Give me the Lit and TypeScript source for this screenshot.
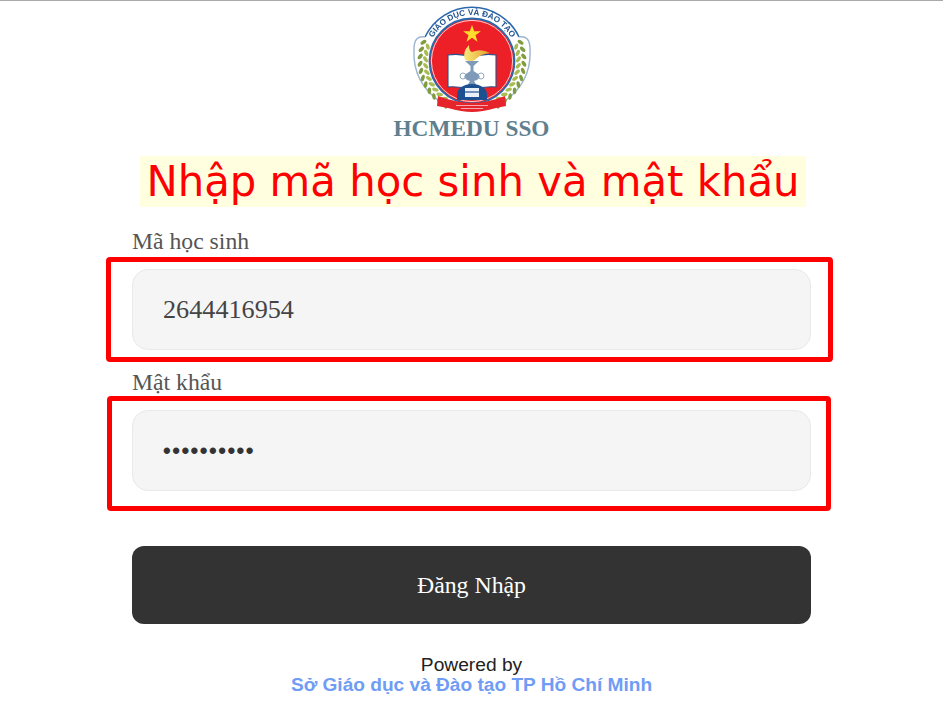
import { LitElement, html, css, svg } from "lit";
import { customElement } from "lit/decorators.js";

const polar = (r: number, deg: number) => {
  const a = (deg * Math.PI) / 180;
  return [+(r * Math.cos(a)).toFixed(2), +(r * Math.sin(a)).toFixed(2)];
};

const wheat = () => {
  const out: unknown[] = [];
  for (let deg = 118; deg <= 198; deg += 8) {
    for (const side of [-1, 1]) {
      const mirror = (d: number) => (side === 1 ? d : 180 - d);
      const [x1, y1] = polar(46.5, mirror(deg));
      const [x2, y2] = polar(52, mirror(deg + 3));
      const lean = side === 1 ? 1 : -1;
      out.push(svg`
        <ellipse cx=${x1} cy=${y1} rx="3.3" ry="1.8" fill="#a8bc52" transform="rotate(${mirror(deg) + 55 * lean} ${x1} ${y1})"></ellipse>
        <ellipse cx=${x2} cy=${y2} rx="3.3" ry="1.8" fill="#7f9c40" transform="rotate(${mirror(deg + 3) - 55 * lean} ${x2} ${y2})"></ellipse>`);
    }
  }
  return out;
};

@customElement("app-root")
export class AppRoot extends LitElement {
  static styles = css`
    :host { display: block; width: 943px; height: 709px; background: #fff; overflow: hidden; font-family: "Liberation Serif", serif; }
    .topline { height: 1px; background: #a9a9a9; }
    .page { display: flex; flex-direction: column; align-items: center; }
    .logo { display: block; margin-top: 8px; width: 124px; height: 106px; overflow: visible; filter: blur(0.4px); }
    .brand { font-size: 23.3px; line-height: 26px; font-weight: 700; color: #5f7f8e; }
    h1 { margin: 15px 0 0 3px; padding: 0 6px; font: 400 41.8px/51px "DejaVu Sans", sans-serif; color: #ff0000; background: #ffffdf; white-space: nowrap; }
    form { width: 679px; margin-top: 22px; display: flex; flex-direction: column; }
    label { font-size: 23.7px; line-height: 24px; color: #555; height: 40px; }
    .field { position: relative; height: 81px; box-sizing: border-box; background: #f5f5f5; border: 1px solid #e9e9e9; border-radius: 16px; padding: 0 30px; display: flex; align-items: center; font-size: 26.2px; color: #444; }
    .dots { font-family: "Liberation Sans", sans-serif; font-size: 22px; font-weight: 700; letter-spacing: 1.5px; color: #333; }
    .mark { position: absolute; box-sizing: border-box; border: 5.5px solid #ff0000; border-radius: 4px; }
    .mark.one { left: -27.5px; right: -22.7px; top: -13.5px; bottom: -12.5px; }
    .mark.two { left: -26.3px; right: -21.3px; top: -15.5px; bottom: -21px; }
    .gap { height: 20px; }
    button { margin-top: 55px; height: 78px; border: 0; border-radius: 12px; background: #333; color: #fff; font: 400 23.8px "Liberation Serif", serif; }
    .foot { margin-top: 31px; text-align: center; font-family: "Liberation Sans", sans-serif; font-size: 19.2px; line-height: 20px; color: #222; }
    .foot a { display: block; font-weight: 700; color: #6f9cf5; text-decoration: none; font-size: 19.1px; }
  `;

  render() {
    return html`
      <div class="topline"></div>
      <div class="page">
        <svg class="logo" viewBox="-62 -52 124 106" role="img" aria-label="Giáo dục và Đào tạo">
          <defs>
            <path id="arc" d="M -45 -1 A 45 45 0 0 1 45 -1"></path>
            <linearGradient id="flame" x1="0" x2="1"><stop offset="0" stop-color="#f6ea7a"></stop><stop offset="1" stop-color="#e79c28"></stop></linearGradient>
          </defs>
          <path d="M -47 -24 A 52 52 0 0 1 47 -24" fill="none" stroke="#2a69ad" stroke-width="1.6"></path>
          <path d="M -47 -24 Q -58 -26 -58 -12 Q -60 22 -30 42" fill="none" stroke="#9db5cf" stroke-width="1.4"></path>
          <path d="M 47 -24 Q 58 -26 58 -12 Q 60 22 30 42" fill="none" stroke="#9db5cf" stroke-width="1.4"></path>
          ${wheat()}
          <circle r="42.5" fill="#ee2027" stroke="#2a69ad" stroke-width="1.8"></circle>
          <circle r="40.6" fill="none" stroke="#fff" stroke-width="0.8"></circle>
          <text font-family="Liberation Sans, sans-serif" font-size="8.2" font-weight="700" fill="#20558f"><textPath href="#arc" startOffset="50%" text-anchor="middle">GIÁO DỤC VÀ ĐÀO TẠO</textPath></text>
          <polygon fill="#ffdd2d" points="0,-36 2.2,-29.7 8.9,-29.7 3.5,-25.7 5.5,-19.3 0,-23.2 -5.5,-19.3 -3.5,-25.7 -8.9,-29.7 -2.2,-29.7"></polygon>
          <path d="M -24 -6 Q -12 -8 -1 -4 L 0 -3 L 1 -4 Q 12 -8 24 -6 L 24 26 Q 12 25 0 29 Q -12 25 -24 26 Z" fill="#fff" stroke="#28508a" stroke-width="1.1"></path>
          <path d="M -7 -1 Q -10 -9 -3 -16 Q -3 -10 0 -9 Q 9 -13 18 -8 Q 9 -7 5 -3 Q 1 2 -7 -1 Z" fill="url(#flame)"></path>
          <path d="M -7 0 H 7 L 1.5 5 V 10 Q 6 12 8 16 Q 6 19 2 20 L 5 25 H -5 L -2 20 Q -6 19 -8 16 Q -6 12 -1.5 10 V 5 Z" fill="#7f9ab8"></path>
          <circle cx="-9" cy="15" r="3" fill="none" stroke="#8aa0b8" stroke-width="0.9"></circle>
          <circle cx="9" cy="15" r="3" fill="none" stroke="#8aa0b8" stroke-width="0.9"></circle>
          <path d="M -15 39 V 33 A 15 10 0 0 1 15 33 V 39 Z" fill="#1d4f91"></path>
          <rect x="-7" y="27" width="14" height="9" fill="#eaf0f7"></rect>
          <path d="M -10 31 H 10" stroke="#1d4f91" stroke-width="1.2"></path>
          <path d="M -34 35 Q -15 42 0 42 Q 15 42 33 35 L 34 45 L 24 47 Q 10 51 0 51 Q -10 51 -24 47 L -35 45 Z" fill="#e6242b"></path>
          <path d="M -16 44.5 H 16 M -11 47.5 H 11" stroke="#f6b9ba" stroke-width="0.9"></path>
        </svg>
        <div class="brand">HCMEDU SSO</div>
        <h1>Nhập mã học sinh và mật khẩu</h1>
        <form>
          <label>Mã học sinh</label>
          <div class="field">2644416954<span class="mark one"></span></div>
          <div class="gap"></div>
          <label>Mật khẩu</label>
          <div class="field"><span class="dots">••••••••••</span><span class="mark two"></span></div>
          <button type="button">Đăng Nhập</button>
        </form>
        <div class="foot">Powered by<a href="#">Sở Giáo dục và Đào tạo TP Hồ Chí Minh</a></div>
      </div>
    `;
  }
}
